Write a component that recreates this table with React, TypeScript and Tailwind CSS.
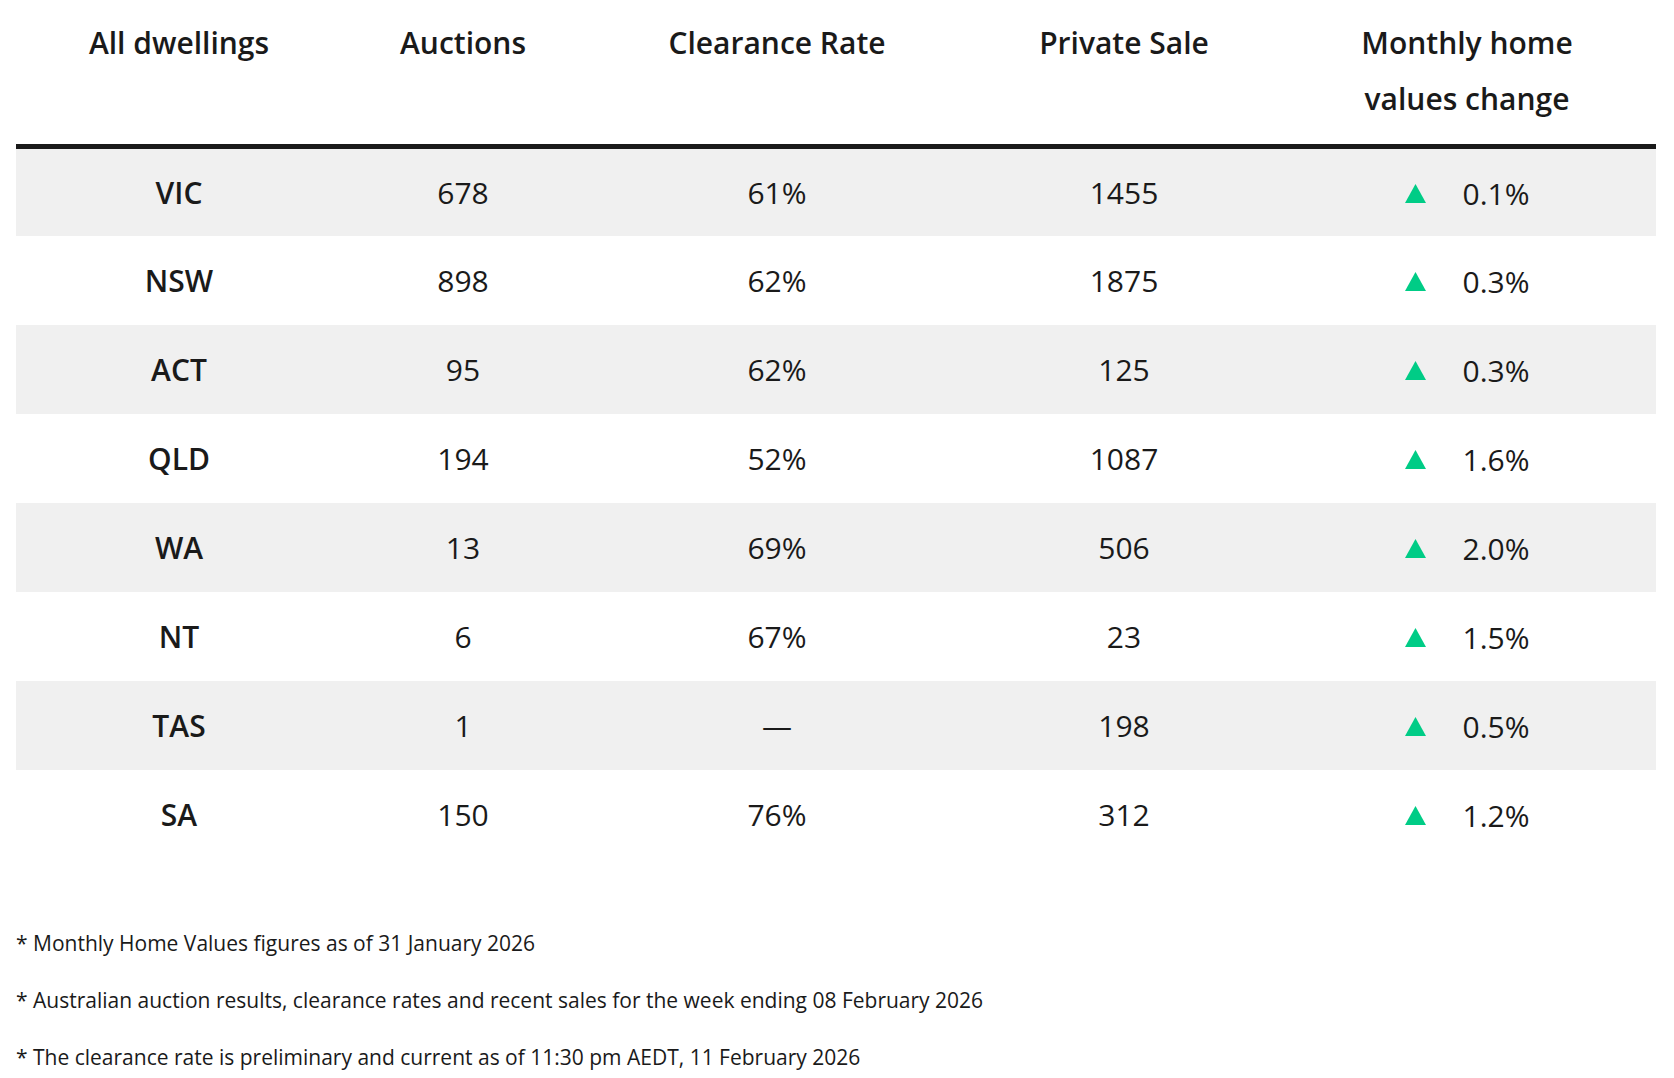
const rows = [
  { state: 'VIC', auctions: '678', rate: '61%', sale: '1455', change: '0.1%' },
  { state: 'NSW', auctions: '898', rate: '62%', sale: '1875', change: '0.3%' },
  { state: 'ACT', auctions: '95', rate: '62%', sale: '125', change: '0.3%' },
  { state: 'QLD', auctions: '194', rate: '52%', sale: '1087', change: '1.6%' },
  { state: 'WA', auctions: '13', rate: '69%', sale: '506', change: '2.0%' },
  { state: 'NT', auctions: '6', rate: '67%', sale: '23', change: '1.5%' },
  { state: 'TAS', auctions: '1', rate: '—', sale: '198', change: '0.5%' },
  { state: 'SA', auctions: '150', rate: '76%', sale: '312', change: '1.2%' },
]

const notes = [
  '* Monthly Home Values figures as of 31 January 2026',
  '* Australian auction results, clearance rates and recent sales for the week ending 08 February 2026',
  '* The clearance rate is preliminary and current as of 11:30 pm AEDT, 11 February 2026',
]

const UpArrow = () => (
  <svg width="21" height="19" viewBox="0 0 21 19" className="inline-block">
    <polygon points="10.5,0 21,19 0,19" fill="#00cc86" />
  </svg>
)

export default function App() {
  return (
    <div className="min-h-screen bg-white pl-[16px] pr-[18px] text-[#1a1a1a] font-['Open_Sans',sans-serif]">
      <table className="w-full table-fixed border-collapse">
        <colgroup>
          <col className="w-[326px]" />
          <col className="w-[242px]" />
          <col className="w-[386px]" />
          <col className="w-[308px]" />
          <col className="w-[378px]" />
        </colgroup>
        <thead>
          <tr className="border-b-[5px] border-[#1a1a1a] text-[30px] font-semibold leading-[56px]">
            <th className="pt-[15px] pb-[17px] align-top font-semibold">All dwellings</th>
            <th className="pt-[15px] pb-[17px] align-top font-semibold">Auctions</th>
            <th className="pt-[15px] pb-[17px] align-top font-semibold">Clearance Rate</th>
            <th className="pt-[15px] pb-[17px] align-top font-semibold">Private Sale</th>
            <th className="pt-[15px] pb-[17px] align-top font-semibold">
              Monthly home
              <br />
              values change
            </th>
          </tr>
        </thead>
        <tbody>
          {rows.map((r, i) => (
            <tr key={r.state} className={`h-[89px] text-center text-[30px] ${i % 2 === 0 ? 'bg-[#f0f0f0]' : 'bg-white'}`}>
              <td className="font-semibold">{r.state}</td>
              <td>{r.auctions}</td>
              <td>{r.rate}</td>
              <td>{r.sale}</td>
              <td>
                <span className="inline-flex items-center gap-[37px]">
                  <UpArrow />
                  <span>{r.change}</span>
                </span>
              </td>
            </tr>
          ))}
        </tbody>
      </table>

      <div className="mt-[70px] flex flex-col gap-[29px] text-[21px] leading-[28px]">
        {notes.map((n) => (
          <p key={n}>{n}</p>
        ))}
      </div>
    </div>
  )
}
